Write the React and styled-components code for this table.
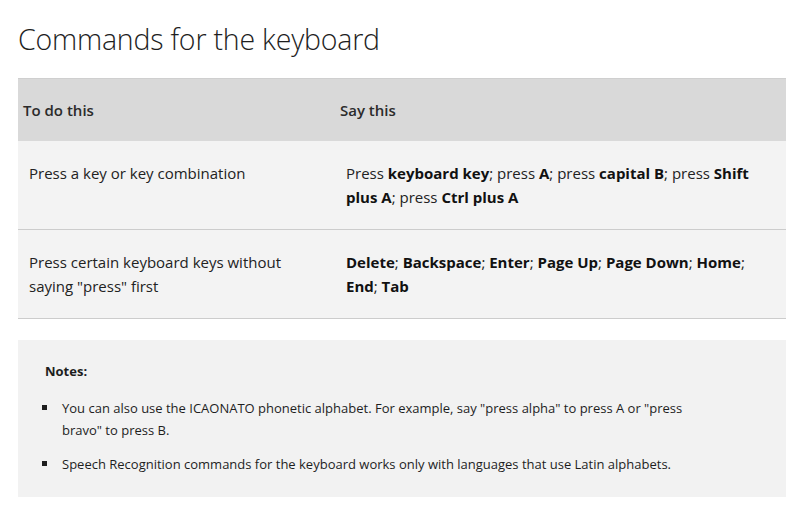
import React from 'react';
import styled, { createGlobalStyle } from 'styled-components';

const GlobalStyle = createGlobalStyle`
  body {
    margin: 0;
    background: #fff;
    font-family: "Open Sans", "Noto Sans", sans-serif;
    color: #1e1e1e;
  }
`;

const Page = styled.div`
  padding: 17px 14px 12px 18px;
`;

const Title = styled.h2`
  margin: 0 0 17px;
  font-size: 28.5px;
  font-weight: 300;
  line-height: 44px;
  color: #1e1e1e;
  letter-spacing: -0.2px;
`;

const Table = styled.table`
  width: 768px;
  table-layout: fixed;
  border-collapse: collapse;
  font-size: 15px;
  line-height: 24px;
`;

const HeadCell = styled.th`
  box-sizing: border-box;
  background: #d9d9d9;
  border-top: 1px solid #cfcfcf;
  text-align: left;
  font-weight: 600;
  padding: 19px 5px 19px 5px;
  width: ${(p) => p.$width || 'auto'};
  color: #2b2b2b;
`;

const Row = styled.tr`
  background: #f3f3f3;
  border-bottom: 1px solid #cccccc;
`;

const Cell = styled.td`
  padding: 20px 14px 20px 11px;
  vertical-align: top;
  color: #222;
  b {
    font-weight: 700;
    color: #111;
  }
`;

const Notes = styled.div`
  margin-top: 21px;
  width: 768px;
  background: #f2f2f2;
  padding: 20px 0 22px;
  font-size: 13px;
  line-height: 22px;
  box-sizing: border-box;
`;

const NotesTitle = styled.div`
  font-weight: 700;
  padding-left: 27px;
  margin-bottom: 15px;
`;

const List = styled.ul`
  margin: 0;
  padding: 0 80px 0 44px;
  list-style: none;
`;

const Item = styled.li`
  position: relative;
  margin-bottom: 12px;
  &:last-child {
    margin-bottom: 0;
  }
  &::before {
    content: '';
    position: absolute;
    left: -20px;
    top: 8px;
    width: 5px;
    height: 5px;
    background: #1e1e1e;
  }
`;

const rows = [
  {
    todo: 'Press a key or key combination',
    say: (
      <>
        Press <b>keyboard key</b>; press <b>A</b>; press <b>capital B</b>; press <b>Shift plus A</b>; press <b>Ctrl plus A</b>
      </>
    ),
  },
  {
    todo: 'Press certain keyboard keys without saying "press" first',
    say: (
      <>
        <b>Delete</b>; <b>Backspace</b>; <b>Enter</b>; <b>Page Up</b>; <b>Page Down</b>; <b>Home</b>; <b>End</b>; <b>Tab</b>
      </>
    ),
  },
];

export default function App() {
  return (
    <Page>
      <GlobalStyle />
      <Title>Commands for the keyboard</Title>
      <Table>
        <thead>
          <tr>
            <HeadCell $width="317px">To do this</HeadCell>
            <HeadCell>Say this</HeadCell>
          </tr>
        </thead>
        <tbody>
          {rows.map((r, i) => (
            <Row key={i}>
              <Cell>{r.todo}</Cell>
              <Cell>{r.say}</Cell>
            </Row>
          ))}
        </tbody>
      </Table>
      <Notes>
        <NotesTitle>Notes:</NotesTitle>
        <List>
          <Item>
            You can also use the ICAONATO phonetic alphabet. For example, say "press alpha" to press A or "press bravo" to press B.
          </Item>
          <Item>Speech Recognition commands for the keyboard works only with languages that use Latin alphabets.</Item>
        </List>
      </Notes>
    </Page>
  );
}
